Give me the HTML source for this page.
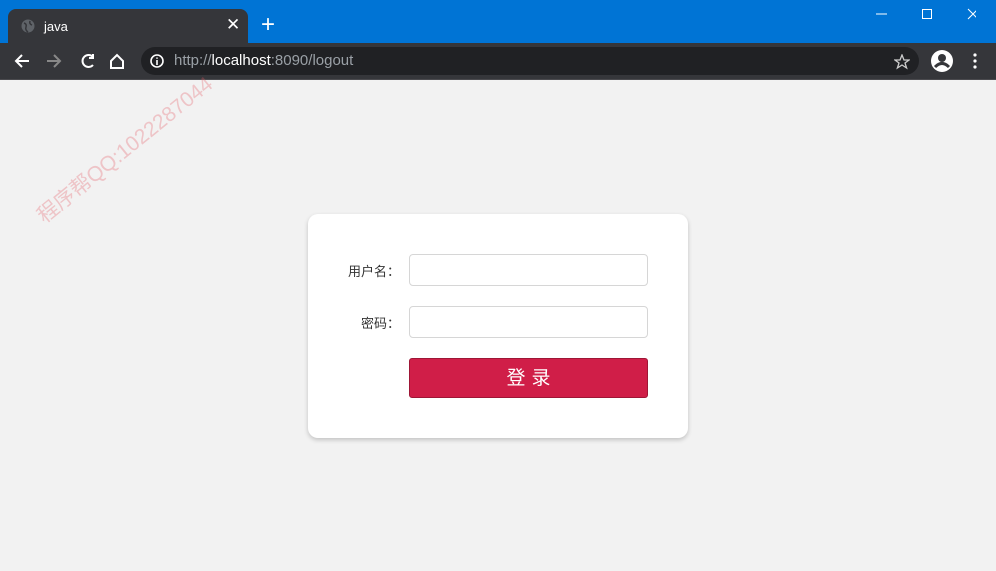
<!DOCTYPE html>
<html><head><meta charset="utf-8"><style>
*{margin:0;padding:0;box-sizing:border-box}
body{width:996px;height:571px;overflow:hidden;background:#f2f2f2;font-family:"Liberation Sans","Noto Sans CJK SC",sans-serif;position:relative}
.top{position:absolute;left:0;top:0;width:996px;height:43px;background:#0074d5}
.tab{position:absolute;left:8px;top:9px;width:240px;height:35px;background:#35363a;border-radius:8px 8px 0 0}
.tab .t{position:absolute;left:36px;top:10px;color:#fff;font-size:13px}
.tab .x{position:absolute;left:218px;top:6px;color:#fff;font-size:17px}
.plus{position:absolute;left:261px;top:13px;color:#fff;font-size:24px;line-height:24px}
.bar{position:absolute;left:0;top:43px;width:996px;height:37px;background:#35363a;border-bottom:1px solid #4a4a4e}
.addr{position:absolute;left:141px;top:4px;width:778px;height:28px;background:#202124;border-radius:14px}
.url{position:absolute;left:33px;top:5px;font-size:15px;color:#9aa0a6}
.url b{font-weight:normal;color:#fff}
svg{position:absolute}
.card{position:absolute;left:308px;top:214px;width:380px;height:224px;background:#fff;border-radius:10px;box-shadow:0 2px 5px rgba(0,0,0,.2)}
.lbl{position:absolute;font-size:13px;color:#333;text-align:right;width:92px}
.inp{position:absolute;left:101px;width:239px;height:32px;border:1px solid #d6d6d6;border-radius:4px}
.btn{position:absolute;left:101px;top:144px;width:239px;height:40px;background:#d01e48;border:1px solid #9e1636;border-radius:3px;color:#fff;font-size:19px;text-align:center;line-height:40px;letter-spacing:6px;padding-left:6px}
.wm{position:absolute;color:rgba(230,90,100,.3);font-size:21px;transform:rotate(-39deg);transform-origin:left top;white-space:nowrap;top:206px;left:30px}
</style></head><body>
<div class="top"></div>
<svg style="left:876px;top:8px" width="100" height="16"><path d="M0 6h11" stroke="#fff"/><rect x="46.5" y="1.5" width="9" height="9" fill="none" stroke="#fff"/><path d="M92 1l10 10M102 1l-10 10" stroke="#fff"/></svg>
<div class="tab"><svg style="left:13px;top:10px" width="14" height="14"><circle cx="7" cy="7" r="6.5" fill="#5f6368"/><path d="M3 4q3 1 2 4t2 5M9 2q-1 3 2 4" stroke="#35363a" fill="none" stroke-width="1.5"/></svg><span class="t">java</span><span class="x">✕</span></div>
<div class="plus">+</div>
<div class="bar">
<svg style="left:13px;top:9px" width="120" height="20"><path d="M16 9H3M9 3L3 9l6 6" stroke="#fff" stroke-width="2" fill="none"/><path d="M34 9h13M41 3l6 6-6 6" stroke="#888" stroke-width="2" fill="none"/><path d="M80 5A6 6 0 1 0 80 13M80 2v4h-4" stroke="#fff" stroke-width="2" fill="none"/><path d="M98 9l6-6 6 6v7h-12z" stroke="#fff" stroke-width="2" fill="none"/></svg>
<div class="addr"><svg style="left:9px;top:7px" width="14" height="14"><circle cx="7" cy="7" r="6" stroke="#fff" stroke-width="1.6" fill="none"/><path d="M7 6v5M7 3.5v1.3" stroke="#fff" stroke-width="1.6"/></svg><div class="url">http://<b>localhost</b>:8090/logout</div>
<svg style="left:753px;top:7px" width="16" height="16"><path d="M8 1l2 5h5l-4 3 1.6 5L8 11l-4.6 3L5 9 1 6h5z" stroke="#ccc" stroke-width="1.3" fill="none"/></svg></div>
<svg style="left:930px;top:6px" width="50" height="24"><circle cx="12" cy="12" r="11" fill="#fff"/><circle cx="12" cy="9" r="4" fill="#35363a"/><path d="M5 18q7-7 14 0" stroke="#35363a" stroke-width="3" fill="none"/><circle cx="45" cy="6" r="1.6" fill="#fff"/><circle cx="45" cy="12" r="1.6" fill="#fff"/><circle cx="45" cy="18" r="1.6" fill="#fff"/></svg>
</div>
<div class="wm">程序帮QQ:1022287044</div>
<div class="card">
<div class="lbl" style="left:0;top:47px">用户名：</div><div class="inp" style="top:40px"></div>
<div class="lbl" style="left:0;top:99px">密码：</div><div class="inp" style="top:92px"></div>
<div class="btn">登录</div>
</div>
</body></html>
